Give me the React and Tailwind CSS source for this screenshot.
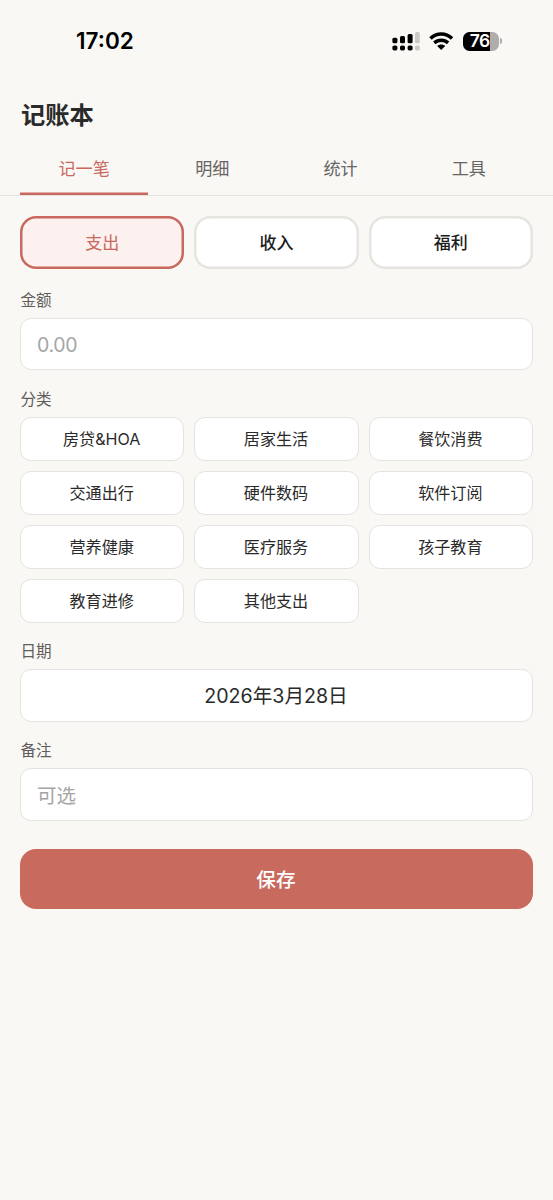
import React from "react";

const tabs = ["记一笔", "明细", "统计", "工具"];
const types = ["支出", "收入", "福利"];
const categories = [
  "房贷&HOA", "居家生活", "餐饮消费",
  "交通出行", "硬件数码", "软件订阅",
  "营养健康", "医疗服务", "孩子教育",
  "教育进修", "其他支出",
];

function StatusBar() {
  return (
    <div className="flex h-[82px] items-center justify-between pl-[76px] pr-[51px] text-black">
      <span className="pt-[1px] text-[22.5px] font-semibold leading-none">17:02</span>
      <div className="flex items-center gap-[9px]">
        <svg className="-ml-px mr-px" width="28" height="20" viewBox="0 0 28 20">
          <g fill="#000">
            <rect x="0.4" y="6.8" width="5" height="5.4" rx="1.5" />
            <rect x="8" y="4.9" width="5" height="7.3" rx="1.5" />
            <rect x="15.6" y="2.9" width="5" height="9.3" rx="1.5" />
            <rect x="0.4" y="14.4" width="5" height="5" rx="1.7" />
            <rect x="8" y="14.4" width="5" height="5" rx="1.7" />
            <rect x="15.6" y="14.4" width="5" height="5" rx="1.7" />
          </g>
          <g fill="#cbcac7">
            <rect x="23" y="0.9" width="4.8" height="11.3" rx="1.5" />
            <rect x="23" y="14.4" width="4.8" height="5" rx="1.7" />
          </g>
        </svg>
        <svg className="-ml-px mr-px" width="24" height="20" viewBox="0 0 24 20">
          <g fill="none" stroke="#000" strokeWidth="3.5">
            <path d="M1.5 7.4C7.5 1.4 17 1.4 23 7.4" />
            <path d="M5.3 11.9C9.3 8.2 15.1 8.2 19.1 11.9" />
          </g>
          <path d="M12.2 19L8.2 15C10.5 13 13.9 13 16.2 15Z" fill="#000" />
        </svg>
        <div className="flex items-center gap-[1.5px]">
          <div className="flex h-[19px] w-[36px] items-center justify-end overflow-hidden rounded-[6.5px] bg-[linear-gradient(to_right,#000_27px,#aeadab_27px)] pr-[9px]">
            <span className="text-[17.5px] font-semibold leading-none tracking-[-0.6px] text-white">76</span>
          </div>
          <div className="h-[6px] w-[2px] rounded-r-full bg-[#aeadab]" />
        </div>
      </div>
    </div>
  );
}

function Label({ children }) {
  return <div className="flex h-[22px] items-center pt-[3px] pl-[0.5px] text-[15.6px] text-[#5f5e5c]">{children}</div>;
}

export default function App() {
  return (
    <div className="min-h-[1200px] w-full bg-[#f9f8f4] font-['Inter','Noto_Sans_CJK_SC',sans-serif] text-[#2a2a2a]">
      <StatusBar />
      <h1 className="flex h-[64px] items-center pl-[21px] pt-[2px] text-[24.3px] font-bold leading-none">记账本</h1>
      <nav className="grid h-[50px] grid-cols-4 border-b border-[#e5e4e1] px-[20px]">
        {tabs.map((t, i) => (
          <button
            key={t}
            className={
              i === 0
                ? "text-[17.1px] text-[#c9685f] shadow-[inset_0_-2.6px_0_#c9685f]"
                : "text-[17.1px] text-[#666563]"
            }
          >
            <span className="block pb-[4px]">{t}</span>
          </button>
        ))}
      </nav>
      <main className="px-[20px] pt-[20px]">
        <div className="grid h-[53px] grid-cols-3 gap-[10px]">
          {types.map((t, i) => (
            <button
              key={t}
              className={
                i === 0
                  ? "rounded-[16px] bg-[#fdf1ef] pt-[2px] text-[17px] text-[#c9685f] shadow-[inset_0_0_0_2.5px_#c9685f]"
                  : "rounded-[16px] bg-white pt-[2px] text-[17px] font-medium text-[#1c1c1c] shadow-[inset_0_0_0_2.5px_#e5e4e0]"
              }
            >
              {t}
            </button>
          ))}
        </div>
        <div className="mt-[19px]"><Label>金额</Label></div>
        <div className="mt-[8px] flex h-[52px] items-center rounded-[11px] border border-[#e4e3e0] bg-white px-[16px] pt-[3px] text-[19.5px] tracking-[-0.3px] text-[#a5a5a5]">0.00</div>
        <div className="mt-[17px]"><Label>分类</Label></div>
        <div className="mt-[8px] grid auto-rows-[44px] grid-cols-3 gap-[10px]">
          {categories.map((c) => (
            <button key={c} className="rounded-[11px] border border-[#e4e3e0] bg-white pr-[1px] text-[16.1px]">{c}</button>
          ))}
        </div>
        <div className="mt-[16px]"><Label>日期</Label></div>
        <div className="mt-[8px] flex h-[53px] items-center justify-center rounded-[11px] border border-[#e4e3e0] bg-white pt-[3px] pr-[1px] text-[19.6px]">2026年3月28日</div>
        <div className="mt-[16px]"><Label>备注</Label></div>
        <div className="mt-[8px] flex h-[53px] items-center rounded-[11px] border border-[#e4e3e0] bg-white px-[16px] pt-[4px] text-[19.5px] text-[#a5a5a5]">可选</div>
        <button className="mt-[28px] h-[60px] w-full rounded-[16px] bg-[#c96a5e] pt-[4px] pr-[1px] text-[19.7px] font-medium text-white">保存</button>
      </main>
    </div>
  );
}
